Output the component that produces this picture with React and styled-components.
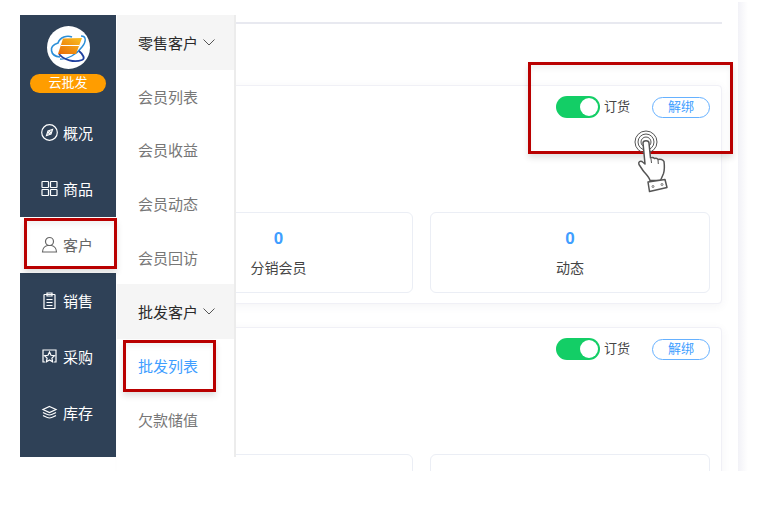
import React from "react";
import styled, { createGlobalStyle } from "styled-components";

const Global = createGlobalStyle`
  html, body { margin: 0; padding: 0; background: #fff; }
  body { font-family: "Liberation Sans", "Noto Sans CJK SC", sans-serif; }
  * { box-sizing: border-box; }
`;

const Frame = styled.div`
  position: relative;
  display: flex;
  width: 728px;
  height: 469px;
  margin: 2px 0 0 20px;
  overflow: hidden;
`;

const Sidebar = styled.nav`
  width: 96px;
  height: 442px;
  margin-top: 13px;
  flex: none;
  background: #2f4157;
  display: flex;
  flex-direction: column;
`;

const Brand = styled.div`
  height: 90px;
  padding: 11px 10px 0;
  display: flex;
  flex-direction: column;
  align-items: center;
  gap: 5px;
`;

const LogoMark = styled.svg`
  width: 43px;
  height: 43px;
  display: block;
`;

const Pill = styled.div`
  width: 76px;
  height: 19px;
  border-radius: 10px;
  background: #ff9d00;
  color: #fff;
  font-size: 13px;
  line-height: 18px;
  text-align: center;
`;

const NavItem = styled.div`
  position: relative;
  height: 56px;
  display: flex;
  align-items: center;
  justify-content: center;
  gap: 5px;
  padding: 0 2px 1px 0;
  font-size: 15px;
  color: ${(p) => (p.$active ? "#666" : "#fff")};
  background: ${(p) => (p.$active ? "#fff" : "transparent")};
`;

const NavIcon = styled.svg`
  width: 17px;
  height: 17px;
  flex: none;
  fill: none;
  stroke: currentColor;
  stroke-width: 1.2;
`;

const Flyout = styled.aside`
  position: absolute;
  left: 97px;
  top: 13px;
  width: 119px;
  height: 442px;
  background: #fff;
  border-right: 2px solid #ececec;
  z-index: 2;

  &::after {
    content: "";
    position: absolute;
    left: 0;
    right: -2px;
    top: 100%;
    height: 16px;
    background: #fff;
  }
`;

const MenuHead = styled.div`
  height: 55px;
  padding: 0 0 1px 21px;
  display: flex;
  align-items: center;
  gap: 5px;
  background: #f5f5f5;
  color: #2a2a2a;
  font-size: 15px;
`;

const Chevron = styled.svg`
  width: 12px;
  height: 7px;
  fill: none;
  stroke: #555;
  stroke-width: 1;
`;

const MenuItem = styled.div`
  position: relative;
  height: 53.6px;
  padding: 0 0 1px 21px;
  display: flex;
  align-items: center;
  font-size: 15px;
  color: ${(p) => (p.$active ? "#409eff" : "#777")};
`;

const Mark = styled.div`
  position: absolute;
  border: 3px solid #b90000;
  box-shadow: 0 4px 6px rgba(0, 0, 0, 0.12), inset 0 4px 5px rgba(0, 0, 0, 0.05);
  pointer-events: none;
  z-index: 3;
`;

const NavMark = styled(Mark)`
  left: 4px;
  right: -1px;
  top: 1px;
  bottom: 4px;
`;

const MenuMark = styled(Mark)`
  left: 6px;
  top: 1px;
  width: 93px;
  height: 52px;
`;

const TopMark = styled(Mark)`
  left: 508px;
  top: 60px;
  width: 205px;
  height: 92px;
`;

const Content = styled.main`
  width: 606px;
  flex: none;
  padding: 20px 0 0 6px;
`;

const Rule = styled.div`
  height: 2px;
  background: #e8e9f0;
  margin-bottom: 61px;
`;

const Card = styled.section`
  height: 219px;
  margin-bottom: 23px;
  padding: 10px 11px 0 21px;
  background: #fff;
  border: 1px solid #f0f0f6;
  border-radius: 4px;
  box-shadow: 0 2px 10px rgba(60, 60, 110, 0.06);
`;

const CardBar = styled.div`
  height: 22px;
  display: flex;
  align-items: center;
  justify-content: flex-end;
  margin-bottom: 94px;
`;

const Toggle = styled.div`
  width: 44px;
  height: 22px;
  border-radius: 11px;
  background: #13ce66;
  display: flex;
  align-items: center;
  justify-content: flex-end;
  padding-right: 2px;
`;

const Knob = styled.div`
  width: 18px;
  height: 18px;
  border-radius: 50%;
  background: #fff;
`;

const ToggleLabel = styled.span`
  margin: 0 22px 0 4px;
  font-size: 13px;
  line-height: 20px;
  color: #444;
`;

const Unbind = styled.div`
  width: 58px;
  height: 21px;
  border: 1px solid #66b1ff;
  border-radius: 11px;
  color: #409eff;
  font-size: 13px;
  line-height: 18px;
  text-align: center;
`;

const Stats = styled.div`
  display: grid;
  grid-template-columns: 269px 1fr;
  gap: 17px;
`;

const Stat = styled.div`
  height: 81px;
  border: 1px solid #ebeef5;
  border-radius: 6px;
  display: flex;
  flex-direction: column;
  align-items: center;
  padding-top: 16px;
  gap: 9px;
`;

const StatValue = styled.div`
  font-size: 17px;
  line-height: 20px;
  font-weight: 700;
  color: #409eff;
`;

const StatLabel = styled.div`
  font-size: 14px;
  line-height: 20px;
  color: #444;
`;

const EdgeStripe = styled.div`
  width: 10px;
  height: 469px;
  margin-left: 16px;
  flex: none;
  background: linear-gradient(90deg, #f2f2f7, #fff);
`;

const Hand = styled.svg`
  position: absolute;
  left: 610px;
  top: 122px;
  width: 40px;
  height: 72px;
  z-index: 4;
`;

const Logo = () => (
  <LogoMark viewBox="0 0 43 43">
    <defs>
      <linearGradient id="fold" x1="1" y1="0" x2="0" y2="1">
        <stop offset="0" stopColor="#f9c020" />
        <stop offset="1" stopColor="#e86a06" />
      </linearGradient>
    </defs>
    <circle cx="21.5" cy="21.5" r="21.5" fill="#fff" />
    <path d="M13 31C3 30 1 20 11 17c2-6 9-8 14-6" fill="none" stroke="#2c8fd8" strokeWidth="1.6" />
    <path d="M34 10c6 0 5 6 1 11-5 7-15 13-22 12" fill="none" stroke="#2c8fd8" strokeWidth="1.4" />
    <path d="M12 28c5 6 15 9 23 6 3-1 2-5-3-9" fill="none" stroke="#1f3f9f" strokeWidth="1.8" />
    <path d="M16 12.500 35 12 29 28H11z" fill="url(#fold)" />
    <path d="M14 19.500H32" stroke="#fff" strokeWidth="1" />
  </LogoMark>
);

const icons = {
  compass: (
    <>
      <circle cx="8.500" cy="8.500" r="7.800" />
      <path d="M11.500 5.500 10 10 5.500 11.500 7 7z" />
      <circle cx="8.500" cy="8.500" r="1" />
    </>
  ),
  grid: (
    <>
      <rect x="1" y="1.500" width="6.500" height="6" rx="0.500" />
      <rect x="9.500" y="1.500" width="6.500" height="6" rx="0.500" />
      <rect x="1" y="9.500" width="6.500" height="6" rx="0.500" />
      <rect x="9.500" y="9.500" width="6.500" height="6" rx="0.500" />
    </>
  ),
  user: (
    <>
      <circle cx="8.500" cy="5.500" r="4" />
      <path d="M1.500 16c0-3.500 2.500-6 5-6.500h4c2.500.5 5 3 5 6.500z" />
    </>
  ),
  clip: (
    <>
      <rect x="3" y="2.500" width="11" height="14" rx="0.500" />
      <path d="M6 1v3h5V1zM5.500 7.500h6M5.500 10.500h6M5.500 13.500h6" />
    </>
  ),
  star: (
    <>
      <path d="M4 14H2V2h13v12h-2" />
      <path d="m8.500 4 1.500 3.300 3.500.4-2.600 2.400.7 3.600-3.100-1.800-3.100 1.800.7-3.600L3.500 7.700 7 7.300z" />
    </>
  ),
  layers: (
    <>
      <path d="M8.500 2.500 15 5.500 8.500 8.500 2 5.500z" />
      <path d="M2 8.500c2 1 4.500 2.500 6.500 2.500S13 9.500 15 8.500" />
      <path d="M2 11.500c2 1 4.500 2.500 6.500 2.500s4.500-1.500 6.500-2.500" />
    </>
  ),
};

const navItems = [
  ["compass", "概况"],
  ["grid", "商品"],
  ["user", "客户", true],
  ["clip", "销售"],
  ["star", "采购"],
  ["layers", "库存"],
];

const Arrow = () => (
  <Chevron viewBox="0 0 12 7">
    <path d="M.5.500 6 6 11.500.500" />
  </Chevron>
);

const AccountCard = ({ showStats }) => (
  <Card>
    <CardBar>
      <Toggle>
        <Knob />
      </Toggle>
      <ToggleLabel>订货</ToggleLabel>
      <Unbind>解绑</Unbind>
    </CardBar>
    <Stats>
      <Stat>
        {showStats && (
          <>
            <StatValue>0</StatValue>
            <StatLabel>分销会员</StatLabel>
          </>
        )}
      </Stat>
      <Stat>
        {showStats && (
          <>
            <StatValue>0</StatValue>
            <StatLabel>动态</StatLabel>
          </>
        )}
      </Stat>
    </Stats>
  </Card>
);

export default function App() {
  return (
    <>
      <Global />
      <Frame>
        <Sidebar>
          <Brand>
            <Logo />
            <Pill>云批发</Pill>
          </Brand>
          {navItems.map(([icon, label, active]) => (
            <NavItem key={label} $active={active}>
              <NavIcon viewBox="0 0 17 17">{icons[icon]}</NavIcon>
              {label}
              {active && <NavMark />}
            </NavItem>
          ))}
        </Sidebar>
        <Flyout>
          <MenuHead>零售客户<Arrow /></MenuHead>
          <MenuItem>会员列表</MenuItem>
          <MenuItem>会员收益</MenuItem>
          <MenuItem>会员动态</MenuItem>
          <MenuItem>会员回访</MenuItem>
          <MenuHead>批发客户<Arrow /></MenuHead>
          <MenuItem $active>批发列表<MenuMark /></MenuItem>
          <MenuItem>欠款储值</MenuItem>
        </Flyout>
        <Content>
          <Rule />
          <AccountCard showStats />
          <AccountCard />
        </Content>
        <EdgeStripe />
        <TopMark />
        <Hand viewBox="0 0 40 72" fill="none" stroke="#555" strokeWidth="1.2" strokeLinejoin="round">
          <circle cx="16" cy="18" r="11" strokeWidth="1" />
          <circle cx="16" cy="18" r="8" strokeWidth="1" />
          <circle cx="16" cy="18" r="5" strokeWidth="1" />
          <path
            fill="#fff"
            strokeWidth="1.5"
            d="M13 19c0-3 6-3 6 0l1.500 15c2-1 3-.5 4 .5 1.500-.5 3 0 3.500 1 2-.5 5 0 6 2 .5 4 .5 9-.5 12l-3 7H20c-1-4-5-7-7-10l-4-6c-1-2.500 1-4 3-3l3 2.500z"
          />
          <path d="M21 35l.5 4M28 36l.3 4" strokeWidth="1" />
          <path fill="#fff" strokeWidth="1.5" d="M18 58l17-2.500 2 8-17.500 4z" />
          <circle cx="23" cy="62.500" r="1" strokeWidth="0.800" />
          <circle cx="32" cy="60.500" r="1" strokeWidth="0.800" />
        </Hand>
      </Frame>
    </>
  );
}
